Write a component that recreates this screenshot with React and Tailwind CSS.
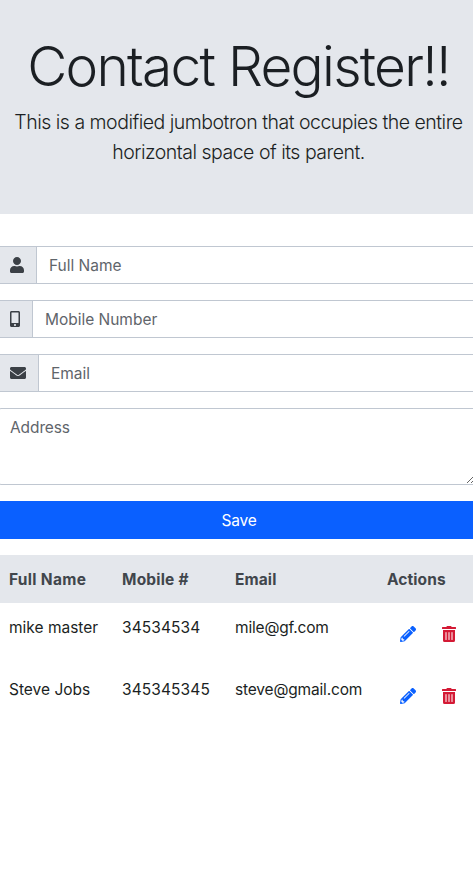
import { FaUser, FaMobileAlt, FaEnvelope, FaPencilAlt, FaTrashAlt } from "react-icons/fa";

const contacts = [
  { name: "mike master", mobile: "34534534", email: "mile@gf.com" },
  { name: "Steve Jobs", mobile: "345345345", email: "steve@gmail.com" },
];

function Field({ icon, addonClass, placeholder }) {
  return (
    <div className="mb-4 flex h-[38px] border-y border-[#c0c7d1]">
      <div className={`flex shrink-0 items-center border-r border-[#c0c7d1] bg-[#e4e7ec] pl-[10px] text-[#3b4046] ${addonClass}`}>
        {icon}
      </div>
      <input
        className="min-w-0 flex-1 px-3 pt-0.5 tracking-[-0.02px] outline-none placeholder:text-[#5f656b]"
        placeholder={placeholder}
      />
    </div>
  );
}

export default function App() {
  return (
    <div className="min-h-[888px] w-full overflow-hidden bg-white font-['Inter',sans-serif] text-[15.5px] leading-6 text-[#1b1f23]">
      <header className="h-[214px] bg-[#e4e7ec] pt-8 pl-1 text-center">
        <h1 className="mb-[7px] text-[55px] leading-[68px] font-light tracking-[-1.72px] whitespace-nowrap">Contact Register!!</h1>
        <p className="text-[19.5px] leading-[30px] font-light tracking-[-0.5px] whitespace-nowrap">
          This is a modified jumbotron that occupies the entire
          <br />
          horizontal space of its parent.
        </p>
      </header>

      <form className="pt-8">
        <Field icon={<FaUser size={16} className="-ml-px" />} addonClass="w-[37px]" placeholder="Full Name" />
        <Field icon={<FaMobileAlt size={16} className="-ml-[3px]" />} addonClass="w-[33px]" placeholder="Mobile Number" />
        <Field icon={<FaEnvelope size={16} />} addonClass="w-[39px]" placeholder="Email" />
        <textarea
          className="mb-4 -ml-0.5 block h-[77px] w-[478px] resize rounded-[3px] border border-[#c0c7d1] pt-[7px] pr-3 pl-[11px] tracking-[-0.1px] outline-none placeholder:text-[#5f656b]"
          placeholder="Address"
        />
        <button type="button" className="mb-4 block h-[38px] w-full bg-[#0a60ff] pt-0.5 pl-[5px] tracking-[-0.2px] text-white">
          Save
        </button>
      </form>

      <table className="w-full table-fixed text-left">
        <colgroup>
          <col className="w-[110px]" />
          <col className="w-[113px]" />
          <col className="w-[152px]" />
          <col />
        </colgroup>
        <thead className="bg-[#e4e7ec] text-[#41464c]">
          <tr className="h-12">
            <th className="pt-0.5 pl-[9px] font-bold tracking-[0.3px]">Full Name</th>
            <th className="pt-0.5 pl-3 font-bold tracking-[0.2px]">Mobile #</th>
            <th className="pt-0.5 pl-3 font-bold tracking-[0.1px]">Email</th>
            <th className="pt-0.5 pl-3 font-bold tracking-[0.1px]">Actions</th>
          </tr>
        </thead>
        <tbody>
          {contacts.map((contact) => (
            <tr key={contact.name} className="h-[62px] align-top">
              <td className="pt-[13px] pl-[9px]">{contact.name}</td>
              <td className="pt-[13px] pl-3 tracking-[0.1px]">{contact.mobile}</td>
              <td className="pt-[13px] pl-3 tracking-[-0.17px]">{contact.email}</td>
              <td className="pt-[23px] pl-[25px]">
                <div className="flex gap-[25px]">
                  <FaPencilAlt size={16} className="text-[#0a60ff]" />
                  <FaTrashAlt size={16} className="text-[#d41a35]" />
                </div>
              </td>
            </tr>
          ))}
        </tbody>
      </table>
    </div>
  );
}
